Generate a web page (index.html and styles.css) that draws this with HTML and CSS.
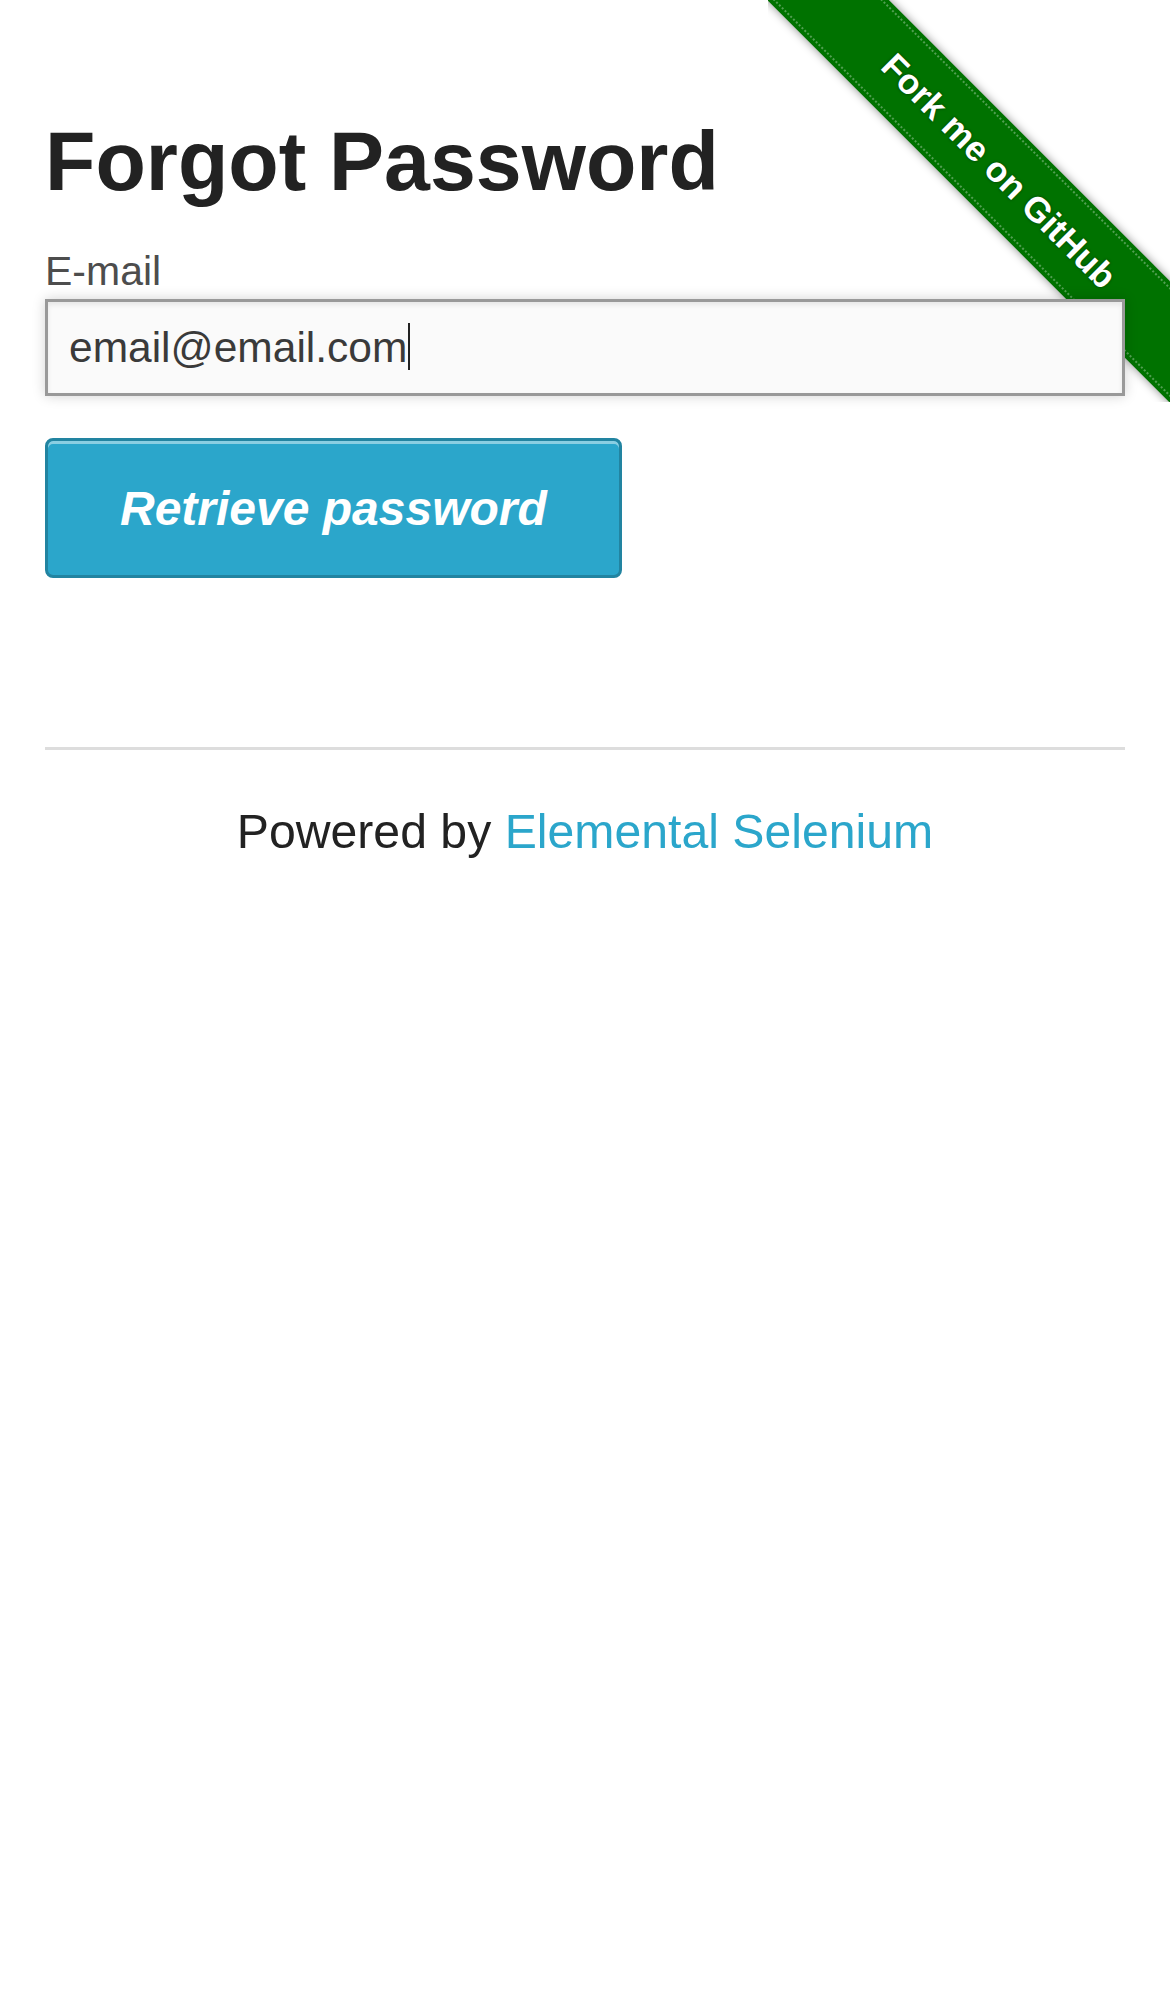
FILE: index.html
```html
<!DOCTYPE html>
<html lang="en">
<head>
<meta charset="utf-8">
<title>Forgot Password</title>
<link rel="stylesheet" href="styles.css">
</head>
<body>
<a class="ribbon" href="#"><span class="band"><span class="band-text">Fork me on GitHub</span></span></a>
<div class="page">
  <h1 class="title">Forgot Password</h1>
  <form class="form">
    <label class="label">E-mail</label>
    <div class="input"><span class="input-text">email@email.com</span><span class="caret"></span></div>
    <button class="btn" type="button">Retrieve password</button>
  </form>
  <hr class="rule">
  <p class="footer">Powered by <a class="link" href="#">Elemental Selenium</a></p>
</div>
</body>
</html>
```
FILE: styles.css
```css
html, body {
  margin: 0;
  padding: 0;
  background: #ffffff;
}
body {
  font-family: "Liberation Sans", Arial, sans-serif;
  color: #222222;
  position: relative;
  min-height: 1992px;
}
.ribbon {
  position: absolute;
  top: 0;
  right: 0;
  width: 402px;
  height: 402px;
  overflow: hidden;
  z-index: 0;
  text-decoration: none;
}
.band {
  position: absolute;
  left: -69px;
  top: 128px;
  width: 600px;
  height: 86px;
  background: #007200;
  transform: rotate(45deg);
  box-shadow: 0 0 10px rgba(0, 0, 0, 0.45);
  display: flex;
  align-items: center;
  justify-content: center;
}
.band::before {
  content: "";
  position: absolute;
  left: 0;
  right: 0;
  top: 4px;
  bottom: 4px;
  border-top: 2px dotted rgba(255, 255, 255, 0.32);
  border-bottom: 2px dotted rgba(255, 255, 255, 0.32);
}
.band-text {
  color: #ffffff;
  font-family: "Liberation Sans", Arial, sans-serif;
  font-weight: bold;
  font-size: 35px;
  line-height: 40px;
  text-shadow: 0 0 3px rgba(0, 0, 0, 0.5);
  white-space: nowrap;
}
.page {
  position: relative;
  z-index: 1;
  margin: 0 45px;
  padding-top: 111px;
}
.title {
  margin: 0;
  font-size: 82.5px;
  line-height: 100px;
  font-weight: bold;
  color: #222222;
}
.form {
  margin: 35px 0 0;
  display: flex;
  flex-direction: column;
  align-items: flex-start;
}
.label {
  font-size: 41px;
  line-height: 50px;
  color: #4d4d4d;
}
.input {
  margin-top: 3px;
  box-sizing: border-box;
  width: 100%;
  height: 97px;
  border: 3px solid #999999;
  background: #fafafa;
  box-shadow: 0 0 12px rgba(0, 0, 0, 0.18), inset 0 3px 5px rgba(0, 0, 0, 0.08);
  padding-left: 21px;
  font-size: 42.5px;
  line-height: 91px;
  color: #3a3a3a;
  white-space: nowrap;
}
.caret {
  display: inline-block;
  width: 2px;
  height: 47px;
  margin-left: 1px;
  background: #222222;
  vertical-align: -8px;
}
.btn {
  margin-top: 42px;
  box-sizing: border-box;
  height: 140px;
  padding: 2px 72px 0;
  border: 3px solid #2284a1;
  border-radius: 8px;
  background: #2ba6cb;
  box-shadow: inset 0 3px 0 rgba(255, 255, 255, 0.45);
  color: #ffffff;
  font-family: "Liberation Sans", Arial, sans-serif;
  font-size: 48px;
  font-weight: bold;
  font-style: italic;
  line-height: 132px;
  cursor: pointer;
}
.rule {
  margin: 169px 0 0;
  border: 0;
  border-top: 3px solid #dddddd;
  height: 0;
}
.footer {
  margin: 53px 0 0;
  text-align: center;
  font-size: 48.2px;
  line-height: 56px;
  color: #222222;
}
.link {
  color: #2ba6cb;
  text-decoration: none;
}
```
